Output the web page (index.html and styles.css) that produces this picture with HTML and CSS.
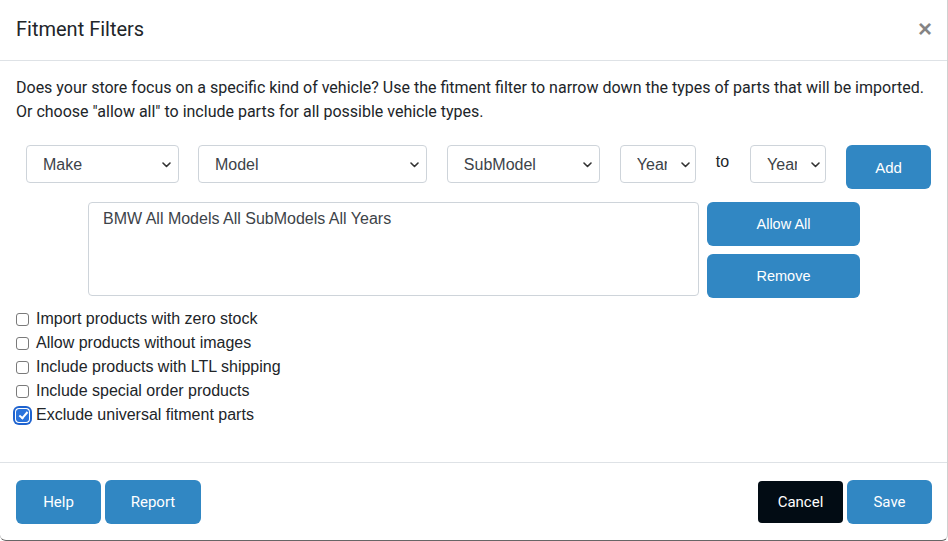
FILE: index.html
```html
<!DOCTYPE html>
<html>
<head>
<meta charset="utf-8">
<link rel="stylesheet" href="styles.css">
</head>
<body>
<div class="modal">
  <div class="modal-header">
    <h1 class="modal-title">Fitment Filters</h1>
    <span class="close">&times;</span>
  </div>
  <div class="modal-body">
    <p class="intro">Does your store focus on a specific kind of vehicle? Use the fitment filter to narrow down the types of parts that will be imported. Or choose "allow all" to include parts for all possible vehicle types.</p>
    <div class="filter-row">
      <span class="select-wrap w-make first"><select class="sel"><option>Make</option></select><svg class="chev" width="9" height="6" viewBox="0 0 9 6"><path d="M1 1l3.5 3.5L8 1" fill="none" stroke="#333" stroke-width="1.6" stroke-linecap="round" stroke-linejoin="round"/></svg></span>
      <span class="select-wrap w-model"><select class="sel"><option>Model</option></select><svg class="chev" width="9" height="6" viewBox="0 0 9 6"><path d="M1 1l3.5 3.5L8 1" fill="none" stroke="#333" stroke-width="1.6" stroke-linecap="round" stroke-linejoin="round"/></svg></span>
      <span class="select-wrap w-make"><select class="sel"><option>SubModel</option></select><svg class="chev" width="9" height="6" viewBox="0 0 9 6"><path d="M1 1l3.5 3.5L8 1" fill="none" stroke="#333" stroke-width="1.6" stroke-linecap="round" stroke-linejoin="round"/></svg></span>
      <span class="select-wrap w-year"><select class="sel"><option>Year</option></select><svg class="chev chev-year" width="9" height="6" viewBox="0 0 9 6"><path d="M1 1l3.5 3.5L8 1" fill="none" stroke="#333" stroke-width="1.6" stroke-linecap="round" stroke-linejoin="round"/></svg></span>
      <span class="to">to</span>
      <span class="select-wrap w-year"><select class="sel"><option>Year</option></select><svg class="chev chev-year" width="9" height="6" viewBox="0 0 9 6"><path d="M1 1l3.5 3.5L8 1" fill="none" stroke="#333" stroke-width="1.6" stroke-linecap="round" stroke-linejoin="round"/></svg></span>
      <button class="btn btn-add">Add</button>
    </div>
    <div class="list-row">
      <div class="listbox">BMW All Models All SubModels All Years</div>
      <div class="list-actions">
        <button class="btn btn-side">Allow All</button>
        <button class="btn btn-side">Remove</button>
      </div>
    </div>
    <div class="checks">
      <label class="check"><input type="checkbox" class="cb"><span>Import products with zero stock</span></label>
      <label class="check"><input type="checkbox" class="cb"><span>Allow products without images</span></label>
      <label class="check"><input type="checkbox" class="cb"><span>Include products with LTL shipping</span></label>
      <label class="check"><input type="checkbox" class="cb"><span>Include special order products</span></label>
      <label class="check"><input type="checkbox" class="cb" checked><span>Exclude universal fitment parts</span></label>
    </div>
  </div>
  <div class="modal-footer">
    <div class="foot-group">
      <button class="btn btn-foot w-help">Help</button>
      <button class="btn btn-foot w-report">Report</button>
    </div>
    <div class="foot-group">
      <button class="btn btn-foot btn-dark w-help">Cancel</button>
      <button class="btn btn-foot w-help">Save</button>
    </div>
  </div>
</div>
</body>
</html>
```
FILE: styles.css
```css
* { box-sizing: border-box; }
html, body { margin: 0; padding: 0; background: #fff; }
body { font-family: Roboto, "Liberation Sans", Arial, sans-serif; color: #212529; }

.modal {
  width: 948px;
  height: 541px;
  background: #fff;
  border-bottom: 1px solid #666;
  border-right: 1px solid #d0d0d0;
  border-radius: 0 0 6px 6px;
  display: flex;
  flex-direction: column;
}

.modal-header {
  display: flex;
  align-items: center;
  justify-content: space-between;
  padding: 15px 15px 17px 16px;
  border-bottom: 1px solid #dee2e6;
  height: 61px;
}
.modal-title {
  margin: 0;
  font-family: Roboto, sans-serif;
  font-size: 20px;
  font-weight: 400;
  line-height: 28px;
  color: #212529;
}
.close {
  font-family: "Liberation Sans", Arial, sans-serif;
  font-size: 24px;
  font-weight: 700;
  line-height: 1;
  color: #000;
  opacity: .48;
  margin-top: -1px;
}

.modal-body {
  flex: 1;
  padding: 15px 16px 0 16px;
}
.intro {
  margin: 0;
  font-size: 16px;
  line-height: 24px;
  color: #212529;
}

.filter-row {
  display: flex;
  align-items: flex-start;
  margin-top: 21px;
  padding-left: 10px;
}
.select-wrap {
  position: relative;
  display: block;
  margin-right: 20px;
  height: 38px;
}
.select-wrap.first { margin-right: 19px; }
.w-make { width: 153px; }
.w-model { width: 229px; }
.w-year { width: 76px; }
.sel {
  -webkit-appearance: none;
  appearance: none;
  width: 100%;
  height: 38px;
  border: 1px solid #ced4da;
  border-radius: 4px;
  background: #fff;
  padding: 0 28px 0 16px;
  font-family: "Liberation Sans", Arial, sans-serif;
  font-size: 16px;
  color: #3d4349;
  outline: none;
}
.chev {
  position: absolute;
  right: 8px;
  top: 17px;
  pointer-events: none;
}
.chev-year { right: 6px; }
.to {
  font-family: "Liberation Sans", Arial, sans-serif;
  font-size: 16px;
  line-height: 24px;
  color: #212529;
  padding-top: 5px;
  margin-right: 21px;
}

.btn {
  border: 0;
  border-radius: 6px;
  background: #3187c3;
  color: #fff;
  font-family: "Liberation Sans", Arial, sans-serif;
  font-size: 15px;
  cursor: pointer;
  padding: 0;
}
.btn-add {
  width: 85px;
  height: 44px;
}

.list-row {
  display: flex;
  margin-top: 13px;
  margin-left: 72px;
}
.listbox {
  width: 611px;
  height: 94px;
  border: 1px solid #ced4da;
  border-radius: 4px;
  padding: 6px 14px;
  font-family: "Liberation Sans", Arial, sans-serif;
  font-size: 16px;
  line-height: 20px;
  color: #3d4349;
}
.list-actions {
  display: flex;
  flex-direction: column;
  gap: 8px;
  margin-left: 8px;
}
.btn-side {
  width: 153px;
  height: 44px;
  font-size: 14.5px;
}

.checks {
  margin-top: 9px;
  display: flex;
  flex-direction: column;
}
.check {
  display: flex;
  align-items: center;
  height: 24px;
  font-family: "Liberation Sans", Arial, sans-serif;
  font-size: 16px;
  color: #212529;
}
.cb {
  -webkit-appearance: none;
  appearance: none;
  width: 13px;
  height: 13px;
  margin: 0 7px 0 0;
  border: 1px solid #7a7a7a;
  border-radius: 3px;
  background: #fff;
  position: relative;
  flex: none;
}
.cb:checked {
  background: #2a73dc;
  border-color: #2a73dc;
  box-shadow: 0 0 0 1px #fff, 0 0 0 3px #1f63cf;
}
.cb:checked::after {
  content: "";
  position: absolute;
  left: 3.5px;
  top: 0.5px;
  width: 3px;
  height: 7px;
  border: solid #fff;
  border-width: 0 2px 2px 0;
  transform: rotate(40deg);
}

.modal-footer {
  display: flex;
  align-items: center;
  justify-content: space-between;
  border-top: 1px solid #dee2e6;
  padding: 16px 15px 16px 16px;
  height: 78px;
}
.foot-group {
  display: flex;
  align-items: center;
  gap: 4px;
}
.btn-foot {
  height: 44px;
  font-family: Roboto, sans-serif;
  font-size: 15px;
}
.w-help { width: 85px; }
.w-report { width: 96px; }
.btn-dark {
  background: #020c14;
  height: 42px;
  border-radius: 4px;
}
```
